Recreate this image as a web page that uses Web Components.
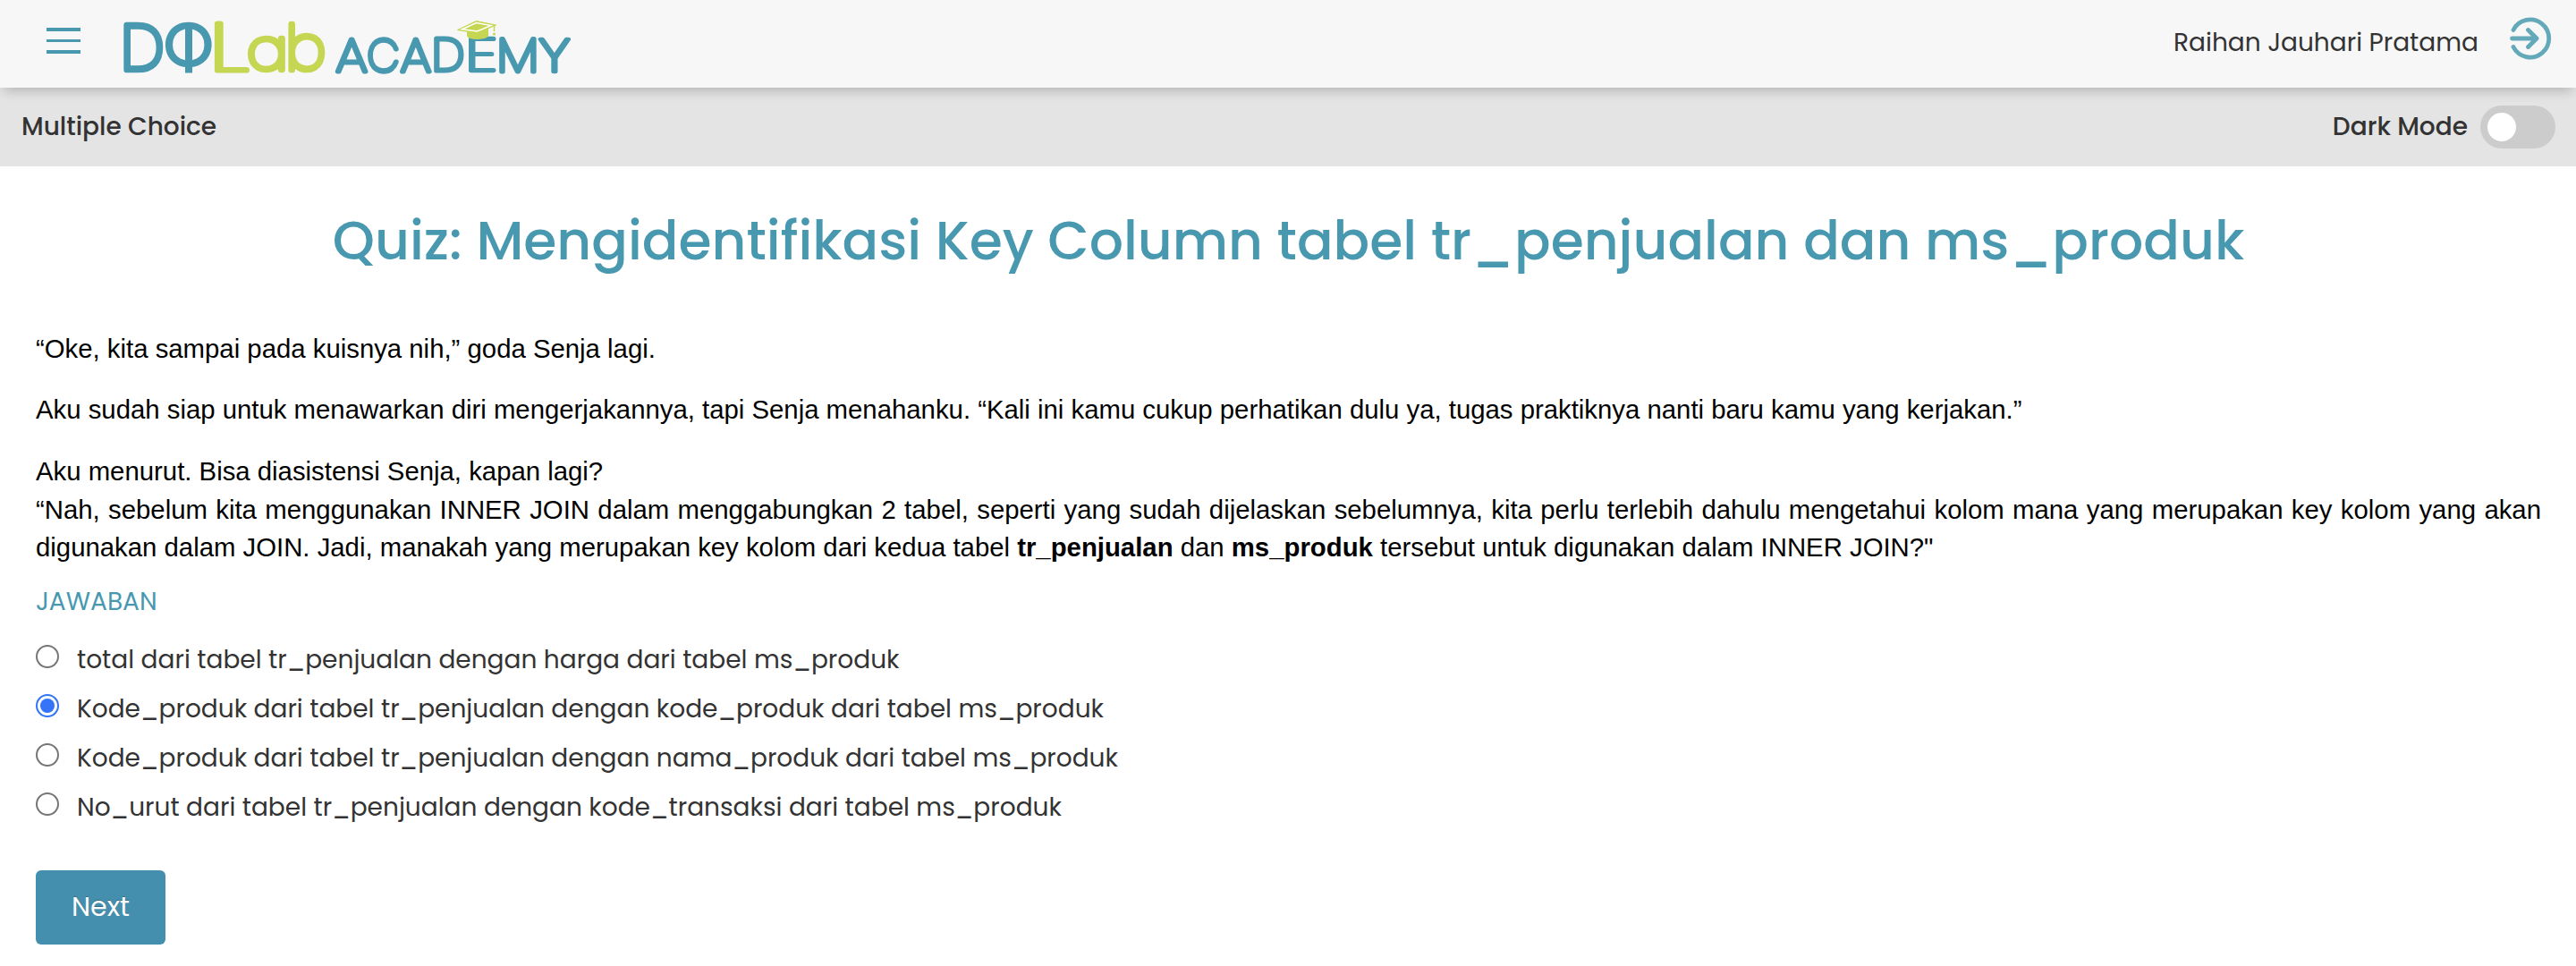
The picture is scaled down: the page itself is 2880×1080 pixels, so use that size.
<!DOCTYPE html>
<html lang="id">
<head>
<meta charset="utf-8">
<title>DQLab Academy</title>
<style>
body{margin:0;background:#fff;font-family:Poppins,Inter,"Open Sans",sans-serif;color:#333}
</style>
</head>
<body>
<quiz-page></quiz-page>
<script>
const define=(name,html,setup)=>customElements.define(name,class extends HTMLElement{
  connectedCallback(){
    if(this.shadowRoot)return;
    this.attachShadow({mode:'open'}).innerHTML=html;
    if(setup)setup.call(this,this.shadowRoot);
  }
});

define('brand-logo',`<style>:host{display:block;width:510px;height:66px}svg{display:block;overflow:visible}
text{font-size:100px;stroke-linejoin:round;stroke-linecap:round;vector-effect:non-scaling-stroke}
.t{fill:#4898b0;stroke:#4898b0}.l{fill:#c5d652;stroke:#c5d652}</style>
<svg width="510" height="66" viewBox="136 20 510 66"><g id="g"></g>
<rect x="207" y="31" width="8" height="50.5" fill="#4898b0"/>
<path d="M522 34V40Q523 44 534 44Q545 43.500 546 40V32Z" fill="#c5d652"/>
<path d="M511.500 33.500L532.500 23.500L554.500 28L533.500 37Z" fill="#c5d652" stroke="#c5d652" stroke-linejoin="round"/>
<path d="M516.500 32.700L532.500 25.500L549 28.500L533.500 35Z" fill="none" stroke="#fff" stroke-width="1.500"/>
<path d="M552.500 29V35" stroke="#c5d652" stroke-width="1.500"/><circle cx="552.500" cy="38" r="1.500" fill="#c5d652"/></svg>`,function(root){
  const letters=[
    ['D',138,24,45,57.500,'t',6.500],['O',185,24,52,52,'t',6.500],['L',240,23,39,59,'l',6.500],['a',277,40,42,42,'l',6.500],['b',322,23,42,59,'l',6.500],
    ['A',375,40.500,37,42,'t',5.200],['C',411,40,35,43,'t',5.200],['A',447,40.500,36,42,'t',5.200],['D',485,41,34,41,'t',5.200],['E',524,41,30,41,'t',5.200],['M',558,40.500,42,42,'t',5.200],['Y',602,40.500,36,42,'t',5.200]];
  const ctx=document.createElement('canvas').getContext('2d'),g=root.getElementById('g');
  for(const [ch,x,y,w,h,cls,sw] of letters){
    const family='Poppins',weight=100;
    ctx.font=`${weight} 100px ${family}`;
    const m=ctx.measureText(ch);
    const iw=m.actualBoundingBoxLeft+m.actualBoundingBoxRight,ih=m.actualBoundingBoxAscent+m.actualBoundingBoxDescent;
    const sx=(w-sw)/iw,sy=(h-sw)/ih;
    const t=document.createElementNS('http://www.w3.org/2000/svg','text');
    t.textContent=ch;
    t.setAttribute('class',cls);
    t.setAttribute('style',`font-family:${family};font-weight:${weight};stroke-width:${sw}px`);
    t.setAttribute('transform',`translate(${x+sw/2+m.actualBoundingBoxLeft*sx} ${y+sw/2+m.actualBoundingBoxAscent*sy}) scale(${sx} ${sy})`);
    g.append(t);
  }
});

define('menu-button',`<style>:host{display:flex;flex-direction:column;gap:9px;width:38px}i{height:3.700px;background:#4898b0}</style><i></i><i></i><i></i>`);

define('exit-icon',`<style>:host{display:block;width:48px;height:48px}svg{display:block}</style>
<svg width="48" height="48" viewBox="0 0 48 48" fill="none" stroke="#63a9b9" stroke-width="4.800" stroke-linecap="round" stroke-linejoin="round"><path d="M5 14.500A21 21 0 1 1 5 33.500M3.500 24H31M21.500 14.500L31 24L21.500 33.500"/></svg>`);

define('site-header',`<style>
:host{display:flex;align-items:center;height:98px;box-sizing:border-box;padding:0 27px 0 52px;background:#f7f7f7;box-shadow:0 8px 12px -4px rgba(0,0,0,.2);position:relative;font-size:28px}
menu-button{margin-bottom:7px}brand-logo{margin:8px auto 0 46px}.name{margin:0 34px 3px 0}exit-icon{margin-bottom:12px}</style>
<menu-button></menu-button><brand-logo></brand-logo><span class="name">Raihan Jauhari Pratama</span><exit-icon></exit-icon>`);

define('toggle-switch',`<style>:host{display:flex;align-items:center;width:84px;height:48px;box-sizing:border-box;padding:8px;border-radius:24px;background:#ccc}i{width:32px;height:32px;border-radius:50%;background:#fff}</style><i></i>`);

define('sub-bar',`<style>:host{display:flex;align-items:center;justify-content:space-between;height:88px;box-sizing:border-box;padding:0 23px 0 24px;background:#e4e4e4;font-size:28px;font-weight:500}
.r{display:flex;align-items:center;gap:14px}span{margin-bottom:1px}</style>
<span>Multiple Choice</span><div class="r"><span>Dark Mode</span><toggle-switch></toggle-switch></div>`);

define('quiz-title',`<style>:host{display:block;text-align:center;color:#4898b0;font-size:60px;font-weight:500;line-height:90px;padding-top:38px}h1{font:inherit;margin:0}</style>
<h1>Quiz: Mengidentifikasi Key Column tabel tr_penjualan dan ms_produk</h1>`);

define('quiz-story',`<style>:host{display:block;font:29.333px/42px "Liberation Sans",Arial,sans-serif;color:#000}p{margin:0 0 26px;text-align:justify}p+p{margin-bottom:27px}p.c{margin-bottom:1px}p:last-child{margin:0}</style>
<p>“Oke, kita sampai pada kuisnya nih,” goda Senja lagi.</p>
<p>Aku sudah siap untuk menawarkan diri mengerjakannya, tapi Senja menahanku. “Kali ini kamu cukup perhatikan dulu ya, tugas praktiknya nanti baru kamu yang kerjakan.”</p>
<p class="c">Aku menurut. Bisa diasistensi Senja, kapan lagi?</p>
<p>“Nah, sebelum kita menggunakan INNER JOIN dalam menggabungkan 2 tabel, seperti yang sudah dijelaskan sebelumnya, kita perlu terlebih dahulu mengetahui kolom mana yang merupakan key kolom yang akan digunakan dalam JOIN. Jadi, manakah yang merupakan key kolom dari kedua tabel <b>tr_penjualan</b> dan <b>ms_produk</b> tersebut untuk digunakan dalam INNER JOIN?"</p>`);

define('answer-option',`<style>:host{display:flex;align-items:center;height:55px;gap:20px;font-size:28px}
i{box-sizing:border-box;width:26px;height:26px;border:2px solid #767676;border-radius:50%;margin-bottom:8px;display:grid;place-items:center}
:host([checked]) i{border-color:#3375f6}:host([checked]) i::after{content:"";width:16px;height:16px;border-radius:50%;background:#3375f6}</style>
<i></i><slot></slot>`);

define('answer-list',`<style>:host{display:block}h2{margin:19px 0 16px;font-size:28px;font-weight:400;line-height:42px;color:#4898b0}</style>
<h2>JAWABAN</h2>
<answer-option>total dari tabel tr_penjualan dengan harga dari tabel ms_produk</answer-option>
<answer-option checked>Kode_produk dari tabel tr_penjualan dengan kode_produk dari tabel ms_produk</answer-option>
<answer-option>Kode_produk dari tabel tr_penjualan dengan nama_produk dari tabel ms_produk</answer-option>
<answer-option>No_urut dari tabel tr_penjualan dengan kode_transaksi dari tabel ms_produk</answer-option>`);

define('next-button',`<style>:host{display:flex;align-items:center;justify-content:center;width:145px;height:83px;margin-top:43px;border-radius:6px;background:#458fae;color:#fff;font-size:30px;text-shadow:0 -1px 0 rgba(0,0,0,.25)}span{margin-bottom:2px}</style><span>Next</span>`);

define('quiz-page',`<style>:host{display:block;height:1080px;overflow:hidden}main{padding:0 39px 0 40px}quiz-story{margin-top:55px}</style>
<site-header></site-header><sub-bar></sub-bar><main><quiz-title></quiz-title><quiz-story></quiz-story><answer-list></answer-list><next-button></next-button></main>`);
</script>
</body>
</html>
